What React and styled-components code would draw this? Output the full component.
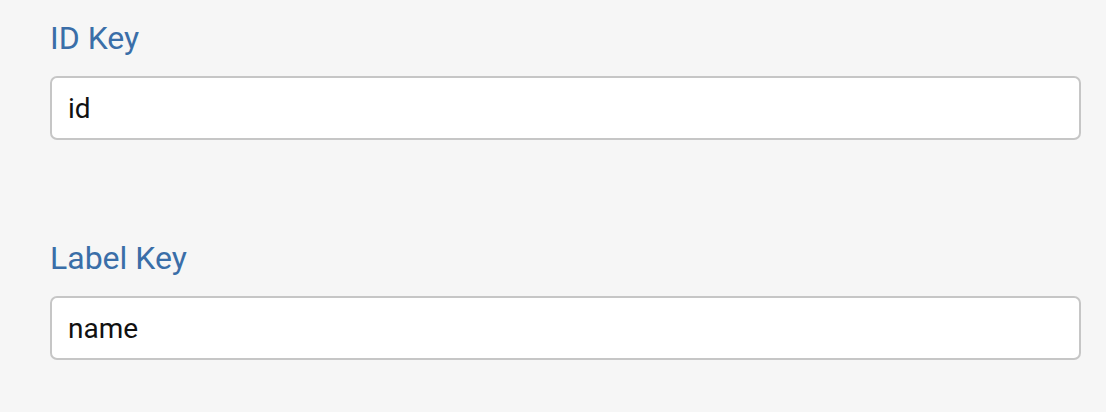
import React from 'react'
import styled, { createGlobalStyle } from 'styled-components'

const GlobalStyle = createGlobalStyle`
  html, body {
    margin: 0;
    padding: 0;
    background: #f6f6f6;
  }
  body {
    font-family: Roboto, 'Liberation Sans', sans-serif;
  }
`

const Form = styled.div`
  width: 1106px;
  height: 412px;
  box-sizing: border-box;
  padding: 19px 0 0 50px;
  display: flex;
  flex-direction: column;
  gap: 99px;
  background: #f6f6f6;
`

const Field = styled.div`
  display: flex;
  flex-direction: column;
  gap: 19px;
`

const Label = styled.label`
  display: block;
  color: #3a6ea8;
  font-size: 32px;
  line-height: 38px;
`

const Input = styled.input`
  box-sizing: border-box;
  width: 1031px;
  height: 64px;
  padding: 0 16px;
  border: 2px solid #c6c6c6;
  border-radius: 7px;
  background: #fff;
  font-family: Roboto, 'Liberation Sans', sans-serif;
  font-size: 28px;
  color: #111;
  outline: none;
`

const fields = [
  { label: 'ID Key', value: 'id' },
  { label: 'Label Key', value: 'name' }
]

export default function App () {
  return (
    <>
      <GlobalStyle />
      <Form>
        {fields.map((f) => (
          <Field key={f.label}>
            <Label>{f.label}</Label>
            <Input defaultValue={f.value} />
          </Field>
        ))}
      </Form>
    </>
  )
}
